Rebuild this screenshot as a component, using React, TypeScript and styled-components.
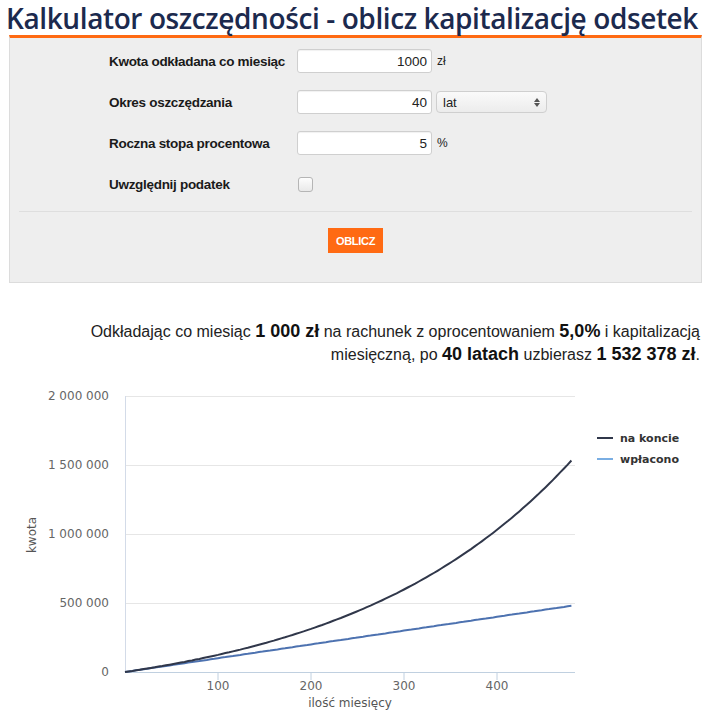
import React from "react";
import styled, { createGlobalStyle } from "styled-components";

const GlobalStyle = createGlobalStyle`
  html, body {
    margin: 0;
    padding: 0;
    background: #ffffff;
  }
  body {
    width: 720px;
    font-family: "Liberation Sans", Arial, sans-serif;
    color: #222;
  }
`;

const Page = styled.div`
  width: 720px;
  height: 714px;
  overflow: hidden;
  position: relative;
`;

const Title = styled.h1`
  margin: 0;
  padding: 0 0 0 6px;
  height: 35px;
  line-height: 36px;
  font-family: "Open Sans", sans-serif;
  font-weight: 600;
  font-size: 28px;
  letter-spacing: -0.4px;
  color: #1c2a4e;
  white-space: nowrap;
`;

const Panel = styled.div`
  margin: 0 18px 0 9px;
  height: 248px;
  box-sizing: border-box;
  background: #eeeeee;
  border: 1px solid #dcdcdc;
  border-top: 3px solid #ff6a13;
  padding-top: 11px;
`;

const Form = styled.div`
  display: flex;
  flex-direction: column;
  gap: 17px;
  padding-left: 99px;
`;

const Row = styled.div`
  display: flex;
  align-items: center;
  height: 24px;
`;

const Label = styled.label`
  width: 188px;
  font-size: 13.5px;
  font-weight: bold;
  color: #1a1a1a;
  letter-spacing: -0.3px;
`;

const NumberInput = styled.div`
  width: 135px;
  height: 24px;
  box-sizing: border-box;
  background: #fff;
  border: 1px solid #cfcfcf;
  border-radius: 3px;
  box-shadow: inset 0 1px 1px rgba(0, 0, 0, 0.06);
  display: flex;
  align-items: center;
  justify-content: flex-end;
  padding-right: 4px;
  font-size: 13.5px;
  color: #222;
`;

const Unit = styled.span`
  margin-left: 5px;
  font-size: 12px;
  color: #222;
`;

const Select = styled.div`
  margin-left: 4px;
  width: 111px;
  height: 22px;
  box-sizing: border-box;
  border: 1px solid #cfcfcf;
  border-radius: 4px;
  background: linear-gradient(#fafafa, #ececec);
  display: flex;
  align-items: center;
  justify-content: space-between;
  padding: 0 6px 0 6px;
  font-size: 13px;
  color: #222;
`;

const Arrows = styled.span`
  display: flex;
  flex-direction: column;
  gap: 1px;
  span {
    width: 0;
    height: 0;
    border-left: 3px solid transparent;
    border-right: 3px solid transparent;
  }
  span:first-child {
    border-bottom: 4px solid #555;
  }
  span:last-child {
    border-top: 4px solid #555;
  }
`;

const Checkbox = styled.div`
  margin-left: 1px;
  width: 15px;
  height: 15px;
  box-sizing: border-box;
  border: 1px solid #b5b5b5;
  border-radius: 3px;
  background: linear-gradient(#fdfdfd, #e9e9e9);
`;

const Divider = styled.div`
  margin: 15px 9px 0 9px;
  border-top: 1px solid #dedede;
`;

const ButtonBar = styled.div`
  display: flex;
  justify-content: center;
  padding-top: 16px;
`;

const Button = styled.button`
  width: 55px;
  height: 25px;
  border: none;
  background: #ff6a13;
  color: #fff;
  font-family: "Liberation Sans", Arial, sans-serif;
  font-weight: bold;
  font-size: 11px;
  letter-spacing: -0.3px;
  padding: 0;
  cursor: pointer;
`;

const Result = styled.p`
  margin: 37px 20px 0 0;
  text-align: right;
  font-size: 16px;
  line-height: 23px;
  color: #222;
  letter-spacing: 0;
  b {
    font-size: 18px;
    color: #111;
  }
`;

const Chart = styled.svg`
  display: block;
  position: absolute;
  left: 0;
  top: 370px;
  font-family: "DejaVu Sans", Verdana, sans-serif;
`;

const r = 0.05 / 12;
const x0 = 125;
const yBase = 302; // y of zero inside svg
const xOf = (m: number) => x0 + m * 0.93;
const yOf = (v: number) => yBase - (v / 2000000) * 276;

const buildPath = (f: (m: number) => number) => {
  const pts: string[] = [];
  for (let m = 0; m <= 480; m += 4) {
    pts.push(`${m === 0 ? "M" : "L"}${xOf(m).toFixed(1)},${yOf(f(m)).toFixed(1)}`);
  }
  return pts.join(" ");
};

const saved = buildPath((m) => (1000 * (Math.pow(1 + r, m) - 1) / r) * (1 + r));
const paid = buildPath((m) => 1000 * m);

const yTicks = [
  { v: 0, label: "0" },
  { v: 500000, label: "500 000" },
  { v: 1000000, label: "1 000 000" },
  { v: 1500000, label: "1 500 000" },
  { v: 2000000, label: "2 000 000" },
];

const SavingsChart = () => (
  <Chart width={720} height={344} viewBox="0 0 720 344">
    {yTicks.map((t) => (
      <g key={t.v}>
        {t.v > 0 && (
          <line x1={x0} x2={575} y1={yOf(t.v) + 0.5} y2={yOf(t.v) + 0.5} stroke="#e6e6e6" strokeWidth={1} />
        )}
        <text x={109} y={yOf(t.v) + 4} textAnchor="end" fontSize={12} fill="#666">
          {t.label}
        </text>
      </g>
    ))}
    <line x1={x0 + 0.5} x2={x0 + 0.5} y1={26} y2={yBase} stroke="#d3dbe8" strokeWidth={1} />
    <line x1={x0} x2={575} y1={yBase + 0.5} y2={yBase + 0.5} stroke="#c0d0e0" strokeWidth={1} />
    {[100, 200, 300, 400].map((m) => (
      <g key={m}>
        <line x1={xOf(m)} x2={xOf(m)} y1={yBase} y2={yBase + 8} stroke="#c0d0e0" strokeWidth={1} />
        <text x={xOf(m)} y={320} textAnchor="middle" fontSize={12} fill="#666">
          {m}
        </text>
      </g>
    ))}
    <text x={350} y={337} textAnchor="middle" fontSize={12} fill="#555">
      ilość miesięcy
    </text>
    <text
      x={36}
      y={165}
      textAnchor="middle"
      fontSize={12}
      fill="#555"
      transform="rotate(-90 36 165)"
    >
      kwota
    </text>
    <path d={paid} fill="none" stroke="#4d72b0" strokeWidth={2} />
    <path d={saved} fill="none" stroke="#30374a" strokeWidth={2} />
    <line x1={597} x2={613} y1={68} y2={68} stroke="#30374a" strokeWidth={2} />
    <text x={620} y={72} fontSize={11} fontWeight="bold" fill="#333">
      na koncie
    </text>
    <line x1={597} x2={613} y1={89} y2={89} stroke="#7aaee3" strokeWidth={2} />
    <text x={620} y={93} fontSize={11} fontWeight="bold" fill="#333">
      wpłacono
    </text>
  </Chart>
);

export default function App() {
  return (
    <Page>
      <GlobalStyle />
      <Title>Kalkulator oszczędności - oblicz kapitalizację odsetek</Title>
      <Panel>
        <Form>
          <Row>
            <Label>Kwota odkładana co miesiąc</Label>
            <NumberInput>1000</NumberInput>
            <Unit>zł</Unit>
          </Row>
          <Row>
            <Label>Okres oszczędzania</Label>
            <NumberInput>40</NumberInput>
            <Select>
              lat
              <Arrows>
                <span />
                <span />
              </Arrows>
            </Select>
          </Row>
          <Row>
            <Label>Roczna stopa procentowa</Label>
            <NumberInput>5</NumberInput>
            <Unit>%</Unit>
          </Row>
          <Row>
            <Label>Uwzględnij podatek</Label>
            <Checkbox />
          </Row>
        </Form>
        <Divider />
        <ButtonBar>
          <Button>OBLICZ</Button>
        </ButtonBar>
      </Panel>
      <Result>
        Odkładając co miesiąc <b>1 000 zł</b> na rachunek z oprocentowaniem <b>5,0%</b> i kapitalizacją
        <br />
        miesięczną, po <b>40 latach</b> uzbierasz <b>1 532 378 zł</b>.
      </Result>
      <SavingsChart />
    </Page>
  );
}
